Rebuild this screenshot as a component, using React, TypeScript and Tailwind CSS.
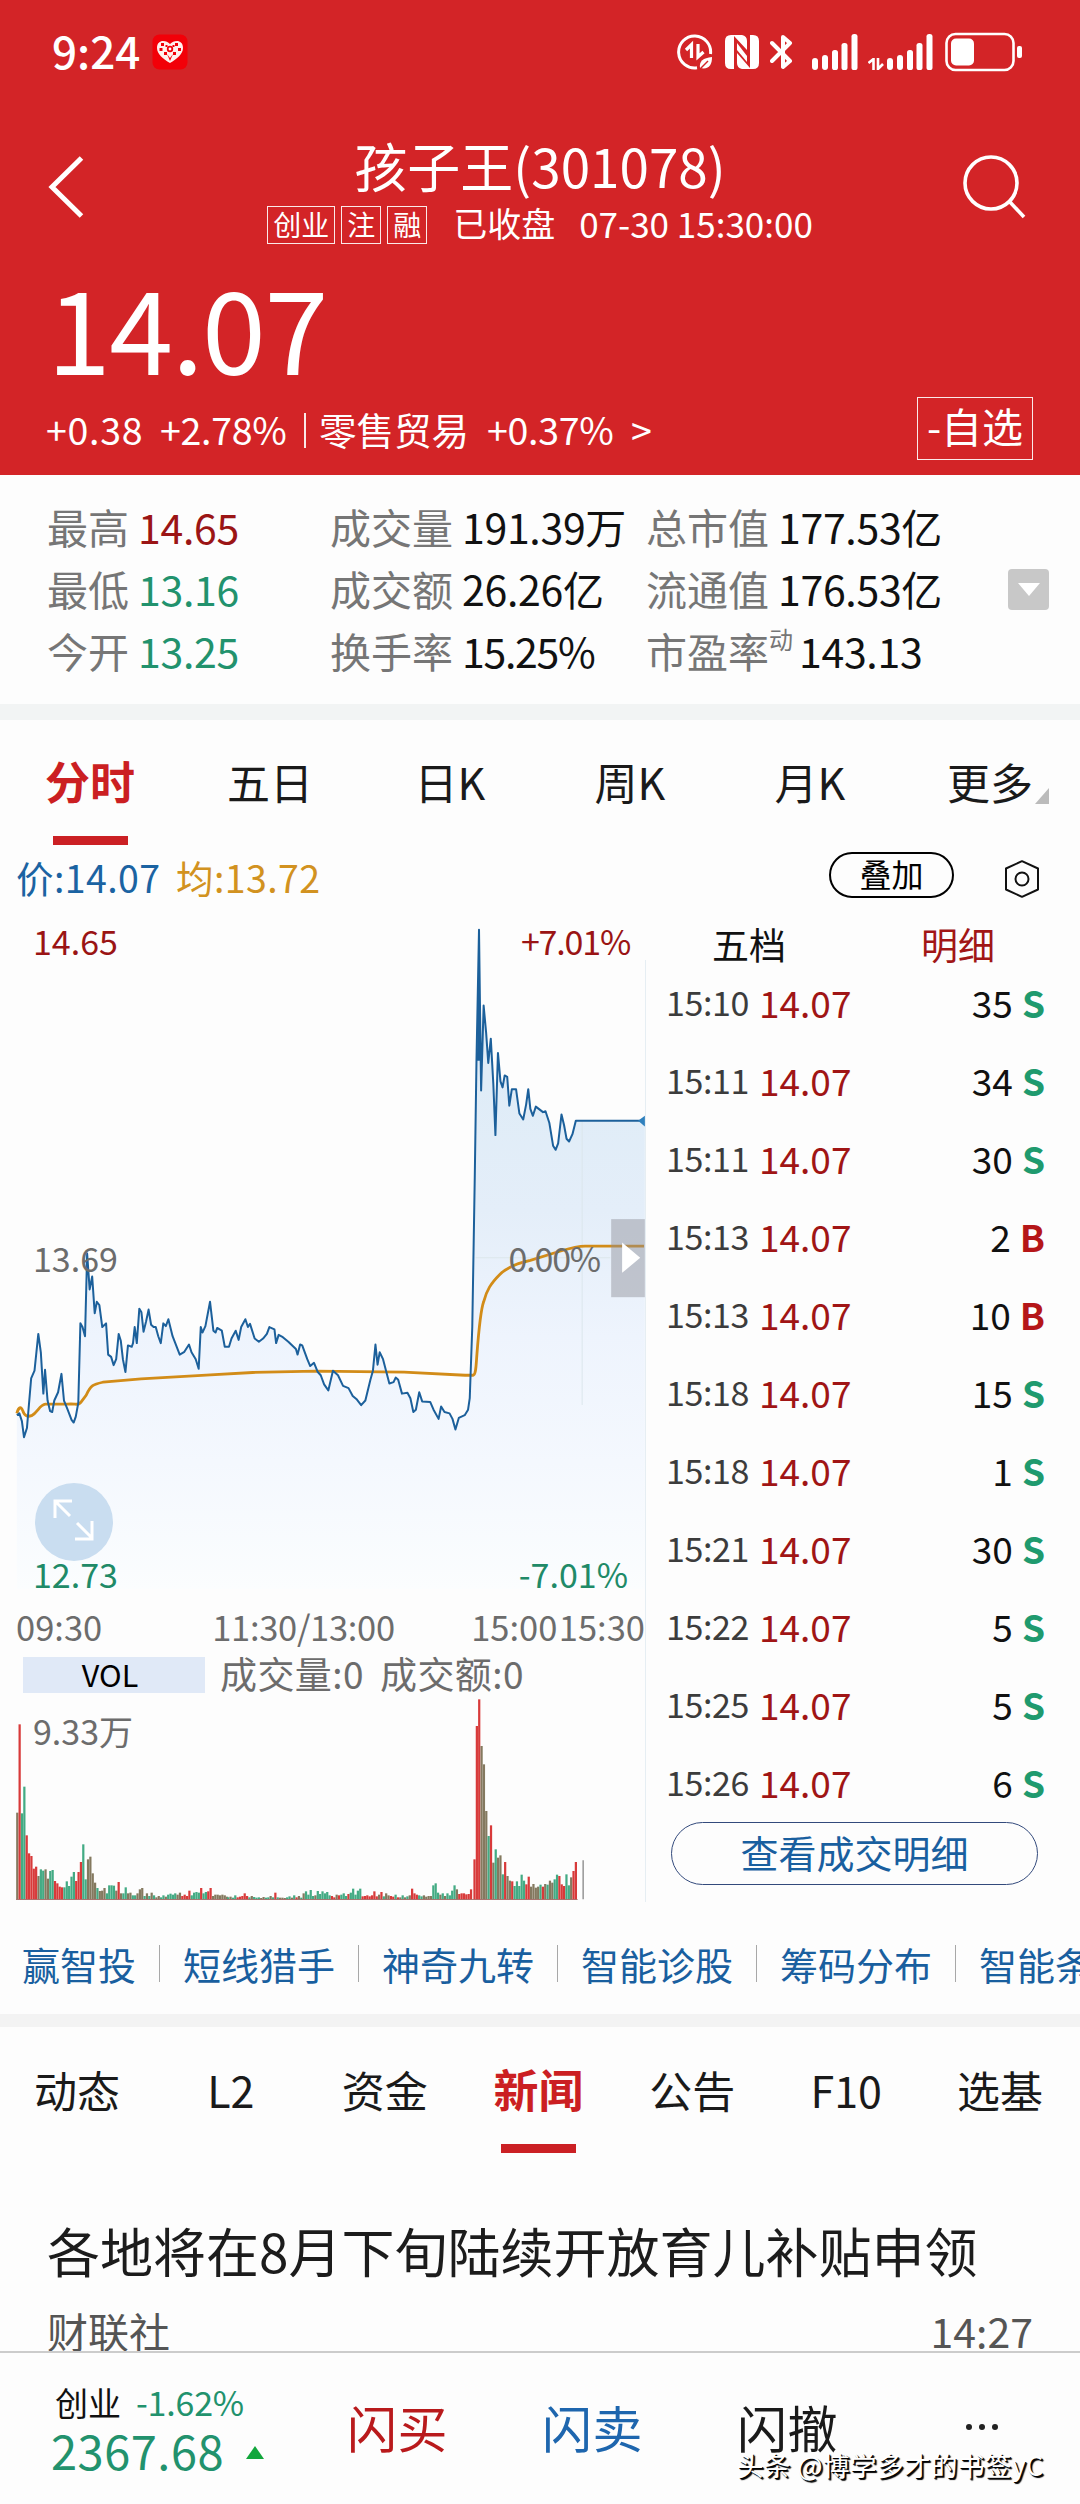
import React from 'react';

const PRICE_POINTS =
  '40,1122 46,1118 52,1135 57,1170 64,1150 74,1042 82,1025 91,945 97,985 103,1075 107,1023 113,1090 119,1113 124,1115 129,1090 138,1072 146,1032 152,1090 160,1108 170,1132 175,1138 180,1125 186,1095 191,922 196,930 202,950 207,770 213,848 219,820 225,900 230,875 236,882 243,930 252,922 257,990 264,995 270,1013 276,1000 282,945 287,960 292,1000 298,1028 304,970 313,973 316,965 320,930 325,965 331,890 336,898 341,940 347,918 353,892 359,925 365,930 370,930 376,950 382,965 388,922 394,928 400,913 410,950 427,990 438,984 449,968 455,985 465,1000 472,1021 477,930 481,942 488,928 499,875 507,938 512,942 516,932 527,938 534,973 544,973 550,955 560,938 567,958 573,930 583,913 589,930 594,923 605,955 615,962 625,955 634,945 640,930 652,935 656,965 662,947 672,952 685,962 703,978 707,990 713,968 718,970 730,1000 737,1015 746,1008 755,1028 762,1035 770,1055 780,1068 791,1025 803,1035 815,1058 828,1063 838,1080 848,1088 858,1100 868,1090 880,1045 886,1025 892,968 897,1012 902,985 910,1000 925,1053 935,1050 940,1040 946,1045 955,1075 968,1073 975,1085 982,1115 988,1110 996,1072 1003,1092 1022,1093 1030,1110 1042,1130 1048,1103 1056,1115 1068,1118 1075,1130 1082,1153 1090,1128 1104,1122 1112,1110 1116,1085 1122,930 1128,600 1132,350 1138,65 1143,415 1149,230 1155,290 1160,355 1166,302 1172,400 1177,512 1183,333 1189,395 1194,408 1199,382 1205,385 1210,448 1216,412 1226,412 1234,465 1243,478 1250,445 1255,412 1260,455 1266,470 1273,450 1290,462 1296,460 1305,485 1314,535 1320,544 1326,530 1334,467 1340,490 1346,520 1352,526 1360,510 1368,481 1530,481';

const AVERAGE_PATH =
  'M40 1118 C44 1104 50 1102 54 1112 C58 1124 66 1126 75 1123 C90 1116 94 1099 108 1098 H160 C180 1096 186 1102 192 1094 L205 1078 C216 1056 222 1055 245 1050 L335 1043 L500 1034 L600 1029 L750 1026 L960 1028 L1105 1035 H1124 C1131 1034 1131 1012 1133 990 C1138 930 1143 890 1149 875 C1156 850 1166 835 1188 815 C1206 799 1240 789 1260 785 L1330 765 C1360 757 1375 754 1390 754 H1530';

type Run = { x: number; h: number[]; c: string };

// Volume per minute: first bar position, bar heights and one colour letter per bar.
const VOLUME: Run[] = [
  {
    x: 41,
    h: [260, 525, 258, 338, 192, 138, 130, 92, 98, 70, 90, 86, 90, 62, 85, 88, 55, 48, 38, 36, 36, 54, 40, 68, 82, 55, 82, 112, 165, 60, 120, 128, 78, 50, 34, 25, 26, 34, 18, 42, 42, 41, 26, 52, 18, 18, 36, 18, 20, 12, 12, 18, 30, 34, 10, 18, 10, 20, 12, 6, 10, 6, 12, 8, 14, 17, 14, 18, 14, 20, 10, 14, 10, 26, 12, 20, 22, 20, 34, 18, 22, 24, 34, 10, 14, 14, 12, 14, 12, 8],
    c: 'brggrrrrrbggbbggrrrrgggggrrrggbbbbgbbbggggbrbggbbggbbbgbgbgbbggbggggbbrrrrggggrggrrbbbbbbb',
  },
  {
    x: 542,
    h: [6, 8, 5, 12, 6, 8, 10, 18, 10, 6, 10, 7, 5, 6, 4, 7, 5, 6, 10, 6, 20, 6, 5, 5, 4, 6, 9, 5, 12, 6, 10, 5, 18, 24, 14, 28, 10, 12, 25, 16, 24, 18, 22, 12, 10, 6, 14, 12, 14, 18, 10, 16, 20, 32, 14, 26, 32, 9, 10, 12, 9, 12, 24, 9, 14, 22, 9, 18, 12, 10, 8, 14, 6, 6, 12, 6, 9, 12, 32, 18, 14, 12, 9, 12, 8, 10, 10, 42, 48, 20, 14, 18, 10, 18, 12, 26, 42, 30, 16, 18, 18, 15, 16, 30],
    c: 'gbggrrrrrgbgggbbggbgrgbbbggbgrbgbggggbggggggrrbrgggrgggggrrrrrrrbrgbbrrgrbgbgbrrrggbbbbgggbgbggggbrrrrrr',
  },
  {
    x: 1127,
    h: [120, 520, 600, 460, 405, 265, 190, 222, 110, 150, 125, 132, 75, 112, 70, 56, 54, 40, 54, 40, 74, 56, 45, 68, 38, 46, 35, 38, 44, 38, 46, 44, 56, 50, 60, 74, 70, 45, 40, 75, 42, 66, 85, 112],
    c: 'rrrbbbgrbgbbgrbbrgggggrrbbbbgrbgbbggrrrggbrr',
  },
];

const TRADES: [string, number, string][] = [
  ['15:10', 35, 'S'],
  ['15:11', 34, 'S'],
  ['15:11', 30, 'S'],
  ['15:13', 2, 'B'],
  ['15:13', 10, 'B'],
  ['15:18', 15, 'S'],
  ['15:18', 1, 'S'],
  ['15:21', 30, 'S'],
  ['15:22', 5, 'S'],
  ['15:25', 5, 'S'],
  ['15:26', 6, 'S'],
];

function SignalBars() {
  return (
    <svg className="h-9 w-[46px]" viewBox="0 0 46 36" fill="#fff">
      <rect x="0" y="24" width="6" height="12" rx="3" />
      <rect x="10" y="21" width="6" height="15" rx="3" />
      <rect x="20" y="16" width="6" height="20" rx="2.6" />
      <rect x="29.500" y="9" width="6" height="27" rx="2.600" />
      <rect x="39.500" y="0" width="6" height="36" rx="2.600" />
    </svg>
  );
}

function StatusBar() {
  return (
    <div className="flex h-[104px] items-center pl-[52px] pr-[57px]">
      <span className="w-[100px] pb-1 text-[44px] font-medium leading-[50px]">9:24</span>
      <svg className="h-9 w-9" viewBox="0 0 36 36">
        <rect x="0.500" y="0.500" width="35" height="35" rx="7" fill="#f20008" />
        <path d="M18 29 C11 25 5 20 5 14 C5 9 8 7 11 7 C14 7 16 8 18 10 C20 8 22 7 25 7 C28 7 31 9 31 14 C31 20 25 25 18 29Z" fill="#fff0ee" />
        <g fill="#f20008">
          <rect x="9" y="9" width="3" height="3" />
          <rect x="23" y="9" width="3" height="3" />
          <circle cx="18" cy="15" r="3.200" />
          <rect x="7.500" y="14" width="3" height="3" />
          <rect x="26" y="14" width="3" height="3" />
          <rect x="12" y="18" width="3" height="3" />
          <rect x="21" y="18" width="3" height="3" />
          <path d="M15 20 L18 24 L21 20 L18 27Z" />
          <rect x="13.500" y="11" width="2" height="2" />
          <rect x="20.500" y="11" width="2" height="2" />
        </g>
        <circle cx="18" cy="15" r="1.400" fill="#fff" />
      </svg>
      <div className="ml-auto flex items-center">
        <svg className="h-9 w-9" viewBox="0 0 36 36" fill="none" stroke="#fff" strokeWidth="3">
          <path d="M33.500 20 A16 16 0 1 0 20 33.800" />
          <path d="M9 16 L14.500 10.500 V24" strokeWidth="3.200" />
          <path d="M21 10 V23 L26.500 18" strokeWidth="3.200" />
          <path d="M35 23 C26 24 22 27 23 34 C32 36 35 31 35 23Z" fill="#fff" stroke="none" />
          <path d="M23 35 L31 27" stroke="#d32427" strokeWidth="1.500" />
        </svg>
        <svg className="ml-3 h-[34px] w-[34px]" viewBox="0 0 34 34">
          <path d="M6 0 H9 V34 H6 Q0 34 0 28 V6 Q0 0 6 0Z M25 34 H28 Q34 34 34 28 V6 Q34 0 28 0 H25Z" fill="#fff" />
          <path d="M9 0 H17 Q22 1 22 6 V15 L9 1Z M25 34 H17 Q12 33 12 28 V18 L25 33Z" fill="#fff" />
          <path d="M12 8 L22 21 V27 L12 15Z" fill="#fff" />
        </svg>
        <svg className="ml-[11px] h-9 w-6" viewBox="0 0 24 36" fill="none" stroke="#fff" strokeWidth="4" strokeLinejoin="round" strokeLinecap="round">
          <path d="M2 9 L20 27 L13 33 V3 L20 9 L2 27" />
        </svg>
        <div className="ml-[18px]"><SignalBars /></div>
        <svg className="ml-[10px] mt-6 h-3 w-4" viewBox="0 0 16 12" fill="none" stroke="#fff" strokeWidth="2.600">
          <path d="M0.500 5 L5.500 1 V12 M10 0 V11 L15 6" />
        </svg>
        <div className="ml-[3px]"><SignalBars /></div>
        <svg className="ml-3 h-10 w-[78px]" viewBox="0 0 78 40">
          <rect x="1.500" y="2" width="67" height="36" rx="9" fill="none" stroke="#fff" strokeWidth="2.600" />
          <rect x="6" y="6.500" width="23" height="27" rx="5" fill="#fff" />
          <rect x="72" y="14" width="5" height="12" rx="2" fill="#fff" />
        </svg>
      </div>
    </div>
  );
}

function Tag({ children }: { children: React.ReactNode }) {
  return (
    <span className="mr-[6px] flex h-[38px] items-center border border-white/90 px-[5px] pb-[3px] text-[28px] leading-none">
      {children}
    </span>
  );
}

function Header() {
  return (
    <header className="h-[475px] bg-[#d32427] text-white">
      <StatusBar />
      <div className="flex h-[146px]">
        <svg className="ml-12 mt-[52px] h-[62px] w-9" viewBox="0 0 36 62" fill="none" stroke="#fff" strokeWidth="5">
          <path d="M33.500 2 L4 31 L33.500 60" />
        </svg>
        <div className="ml-[176px] flex w-[560px] flex-col items-center pt-[31px]">
          <h1 className="h-[69px] text-[53px] leading-[60px]">孩子王(301078)</h1>
          <div className="flex items-center">
            <Tag>创业</Tag>
            <Tag>注</Tag>
            <Tag>融</Tag>
            <span className="ml-5 pb-1 text-[34px] leading-[38px]">已收盘</span>
            <span className="ml-6 pb-1 text-[35px] leading-[38px]">07-30 15:30:00</span>
          </div>
        </div>
        <svg className="ml-auto mr-[54px] mt-[51px] h-[64px] w-[64px]" viewBox="0 0 64 64" fill="none" stroke="#fff" strokeWidth="3.600">
          <circle cx="29" cy="28" r="26" />
          <path d="M47 46 L62 62" />
        </svg>
      </div>
      <div className="h-[147px] pl-[47px] text-[115px] leading-[150px] tracking-[-1.500px]">14.07</div>
      <div className="flex h-[63px] items-center pl-[46px] pr-[47px] text-[37.5px] leading-none">
        <span className="w-[114px] tracking-[0.700px]">+0.38</span>
        <span className="w-[144px] tracking-[-0.300px]">+2.78%</span>
        <span className="mr-[13px] mt-1 h-[35px] w-[2px] bg-white/90" />
        <span className="w-[168px] text-[37.5px]">零售贸易</span>
        <span className="w-[144px] tracking-[-0.300px]">+0.37%</span>
        <span>&gt;</span>
        <span className="ml-auto flex h-[63px] w-[116px] items-center justify-center border border-white/90 pb-1.5 text-[41px]">-自选</span>
      </div>
    </header>
  );
}

function Stat({ label, value, tone, w }: { label: React.ReactNode; value: string; tone?: string; w: string }) {
  return (
    <div className="flex whitespace-nowrap">
      <span className={`${w} text-[#767676]`}>{label}</span>
      <span className={tone || 'tracking-[-0.300px] text-[#111]'}>{value}</span>
    </div>
  );
}

function Stats() {
  return (
    <section className="flex h-[229px] pl-[47px] pt-5 text-[41px] leading-[62px]">
      <div className="w-[283px]">
        <Stat w="w-[91px]" label="最高" value="14.65" tone="tracking-[-0.300px] text-[#9b1515]" />
        <Stat w="w-[91px]" label="最低" value="13.16" tone="tracking-[-0.300px] text-[#22926d]" />
        <Stat w="w-[91px]" label="今开" value="13.25" tone="tracking-[-0.300px] text-[#22926d]" />
      </div>
      <div className="w-[316px]">
        <Stat w="w-[132px]" label="成交量" value="191.39万" />
        <Stat w="w-[132px]" label="成交额" value="26.26亿" />
        <Stat w="w-[132px]" label="换手率" value="15.25%" tone="tracking-[-1.300px] text-[#111]" />
      </div>
      <div className="w-[362px]">
        <Stat w="w-[132px]" label="总市值" value="177.53亿" />
        <Stat w="w-[132px]" label="流通值" value="176.53亿" />
        <Stat
          w="w-[153px] flex"
          label={<>市盈率<span className="text-[24px] leading-[40px]">动</span></>}
          value="143.13"
        />
      </div>
      <span className="mt-[74px] flex h-[41px] w-[41px] items-center justify-center rounded bg-[#c8c8c8]">
        <svg className="h-[13px] w-[22px]" viewBox="0 0 22 13"><path d="M0 0 H22 L11 13Z" fill="#fff" /></svg>
      </span>
    </section>
  );
}

function Tab({ label, active, corner }: { label: string; active?: boolean; corner?: boolean }) {
  return (
    <div className="relative flex flex-1 flex-col items-center">
      <span className={active ? 'h-[82px] text-[45px] font-bold leading-[54px] text-[#cb1f22]' : 'h-[82px] text-[43px] leading-[54px] text-[#1a1a1a]'}>
        {label}
      </span>
      {active && <span className="h-[9px] w-[75px] bg-[#cb2024]" />}
      {corner && (
        <svg className="absolute right-[31px] top-[34px] h-4 w-[14px]" viewBox="0 0 14 16"><path d="M14 0 V16 H0Z" fill="#bbb" /></svg>
      )}
    </div>
  );
}

function PriceChart() {
  return (
    <div className="relative h-[696px] w-[645px]">
      <svg className="absolute -top-[8px] left-0 h-[720px] w-[660px]" viewBox="0 0 1568 1568" preserveAspectRatio="none" fill="none">
        <defs>
          <linearGradient id="area" gradientUnits="userSpaceOnUse" x1="0" y1="400" x2="0" y2="1500">
            <stop offset="0" stopColor="#dfecf7" />
            <stop offset="0.250" stopColor="#e4eef9" />
            <stop offset="0.500" stopColor="#eef4fd" />
            <stop offset="0.750" stopColor="#f4f8fe" />
            <stop offset="1" stopColor="#fbfdfe" />
          </linearGradient>
        </defs>
        <polygon points={`${PRICE_POINTS} 1532,481 1532,1500 40,1500`} fill="url(#area)" />
        <path d="M1130 779 H1450 M1383 481 V1100" stroke="#dbe6ec" strokeWidth="1" vectorEffect="non-scaling-stroke" />
        <path d={AVERAGE_PATH} stroke="#d28c18" strokeWidth="2.800" vectorEffect="non-scaling-stroke" />
        <polyline points={PRICE_POINTS} stroke="#1c609b" strokeWidth="2" strokeLinejoin="round" vectorEffect="non-scaling-stroke" />
        <path d="M1133 350 L1138 65 L1142 350Z" fill="#1c609b" />
        <path d="M1516 481 L1532 470 V493Z" fill="#2f80bd" />
        <rect x="1452" y="695" width="80" height="170" fill="#8b8b95" fillOpacity="0.450" />
        <path d="M1478 746 L1521 779 L1478 812Z" fill="#fff" />
      </svg>
      <div className="absolute inset-0 text-[34px] leading-[40px]">
        <span className="absolute left-[33px] top-[13px] text-[#9a1414]">14.65</span>
        <span className="absolute right-[15px] top-[13px] tracking-[-1.200px] text-[#9a1414]">+7.01%</span>
        <span className="absolute left-[33px] top-[330px] text-[#6c6c6c]">13.69</span>
        <span className="absolute right-[45px] top-[330px] tracking-[-1.200px] text-[#6c6c6c]">0.00%</span>
        <svg className="absolute left-[35px] top-[575px] h-[78px] w-[78px]" viewBox="0 0 78 78" fill="none" stroke="#fff" strokeWidth="3">
          <circle cx="39" cy="39" r="39" fill="#c9ddf0" stroke="none" />
          <path d="M35 33 L20 18 M20 35 V18 H37 M42 40 L57 55 M57 38 V56 H40" />
        </svg>
        <span className="absolute left-[33px] top-[646px] text-[#208a67]">12.73</span>
        <span className="absolute right-[17px] top-[646px] text-[#208a67]">-7.01%</span>
      </div>
    </div>
  );
}

function VolumeChart() {
  const fills: Record<string, string> = { r: '#d83a3a', g: '#43ab84', b: '#84795f' };
  return (
    <div className="relative h-[206px] w-[645px]">
      <svg className="h-[204px] w-[645px]" viewBox="0 410 1532 612" preserveAspectRatio="none">
        {VOLUME.map((run) =>
          run.h.map((h, i) => (
            <rect key={`${run.x}-${i}`} x={run.x + i * 5.6 - 2.6} y={1020 - h} width="5.300" height={h} fill={fills[run.c[i] || 'b']} />
          )),
        )}
        <path d="M38 1021 H1372" stroke="#9a5550" strokeWidth="3" />
        <path d="M1385 903 V1020" stroke="#6a6a6a" strokeWidth="2.500" />
      </svg>
      <span className="absolute left-[33px] top-[15px] text-[34px] leading-[40px] text-[#6c6c6c]">9.33万</span>
    </div>
  );
}

function ChartColumn() {
  return (
    <div className="w-[645px] shrink-0">
      <PriceChart />
      <div className="flex h-[50px] pl-4 text-[34.5px] leading-[44px] text-[#6c6c6c]">
        <span className="w-[197px]">09:30</span>
        <span className="w-[260px] tracking-[-0.300px]">11:30/13:00</span>
        <span className="w-[88px]">15:00</span>
        <span>15:30</span>
      </div>
      <div className="flex h-[42px] items-center whitespace-nowrap pl-[23px] text-[37px] leading-[36px] text-[#6c6c6c]">
        <span className="mr-[15px] flex h-9 w-[182px] items-center justify-center bg-[#e0e9f7] pb-1 pr-2 pt-0.5 text-[30.5px] text-black">VOL</span>
        <span className="w-[160px] pb-1 tracking-[0.400px]">成交量:0</span>
        <span className="pb-1 tracking-[0.400px]">成交额:0</span>
      </div>
      <VolumeChart />
    </div>
  );
}

function TradesColumn() {
  return (
    <div className="flex-1 pl-5">
      <div className="flex h-[57px] text-[37px] leading-[72px] text-[#111]">
        <span className="w-[209px] pl-[46px]">五档</span>
        <span className="pl-[46px] text-[#a11616]">明细</span>
      </div>
      {TRADES.map(([time, qty, side], i) => (
        <div key={i} className="flex h-[78px] pr-[35px] text-[37px] leading-[74px]">
          <span className="w-[93px] text-[34px] tracking-[-0.400px] text-[#3c3c3c]">{time}</span>
          <span className="text-[#a01515]">14.07</span>
          <span className="ml-auto text-[#111]">{qty}</span>
          <span className={side === 'S' ? 'ml-[9px] font-bold text-[#1f9a6e]' : 'ml-[9px] font-bold text-[#b51618]'}>{side}</span>
        </div>
      ))}
      <button className="ml-[5px] mt-[-1px] block h-[63px] w-[367px] rounded-full border border-[#334a7c] pb-1 text-[38px] leading-[56px] text-[#195f9f]">
        查看成交明细
      </button>
    </div>
  );
}

function QuoteChart() {
  return (
    <section className="h-[1067px]">
      <div className="flex h-[62px] items-center pl-4 pr-[41px] text-[37.5px]">
        <span className="w-[160px] tracking-[0.400px] text-[#1b63a2]">价:14.07</span>
        <span className="tracking-[0.400px] text-[#d29220]">均:13.72</span>
        <span className="-mt-1 ml-auto flex h-[46px] w-[125px] items-center justify-center rounded-full border-2 border-black pb-1 text-[32px] leading-none text-black">叠加</span>
        <svg className="ml-[51px] mt-1 h-[38px] w-[34px]" viewBox="0 0 34 38" fill="none" stroke="#111" strokeWidth="2">
          <path d="M17 1.200 L33 8.500 V29.500 L17 36.800 L1 29.500 V8.500Z" strokeLinejoin="round" />
          <circle cx="17" cy="19" r="6.500" />
        </svg>
      </div>
      <div className="flex">
        <ChartColumn />
        <div className="mt-[52px] w-px bg-[#e6eef3]" />
        <TradesColumn />
      </div>
    </section>
  );
}

function ToolLinks() {
  const links = ['短线猎手', '神奇九转', '智能诊股', '筹码分布', '智能条件'];
  return (
    <nav className="flex h-[101px] items-center overflow-hidden whitespace-nowrap pl-[22px] text-[38px] leading-none text-[#195f9f]">
      <span className="mr-[23px]">赢智投</span>
      {links.map((label) => (
        <React.Fragment key={label}>
          <span className="h-[37px] w-px shrink-0 bg-[#a8a8a8]" />
          <span className="mx-[23px] shrink-0">{label}</span>
        </React.Fragment>
      ))}
    </nav>
  );
}

function BottomBar() {
  return (
    <footer className="relative flex h-[153px] border-t-2 border-[#cccccc] text-[50px] leading-[60px]">
      <div className="w-[347px] pl-[51px] pt-[27px]">
        <div className="flex h-[45px] text-[34px] leading-[44px] text-[#22926d]">
          <span className="w-[85px] pl-1 text-[33px] text-[#111]">创业</span>
          <span className="w-[120px] tracking-[-0.200px]">-1.62%</span>
        </div>
        <div className="flex items-center text-[47px] leading-[50px] tracking-[0.500px] text-[#22926d]">
          <span className="w-[195px]">2367.68</span>
          <svg className="mt-1 h-[13px] w-[18px]" viewBox="0 0 18 13"><path d="M9 0 L18 13 H0Z" fill="#12a63c" /></svg>
        </div>
      </div>
      <span className="w-[195px] pt-[43px] tracking-[0.500px] text-[#b91a1c]">闪买</span>
      <span className="w-[195px] pt-[43px] tracking-[0.500px] text-[#1e66ae]">闪卖</span>
      <span className="w-[229px] pt-[43px] tracking-[0.500px] text-[#1a1a1a]">闪撤</span>
      <div className="mt-[71px] flex gap-[7px]">
        <i className="h-[6px] w-[6px] rounded-full bg-[#222]" />
        <i className="h-[6px] w-[6px] rounded-full bg-[#222]" />
        <i className="h-[6px] w-[6px] rounded-full bg-[#222]" />
      </div>
      <span className="absolute left-[737px] top-[94px] whitespace-nowrap text-[26.5px] leading-[36px] tracking-[0.500px] text-white [text-shadow:1px_1px_0_#000,2px_2px_1px_#000]">
        头条 @博学多才的书签yC
      </span>
    </footer>
  );
}

export default function App() {
  return (
    <main className="h-[2504px] w-[1080px] overflow-hidden bg-[#fdfdfd] font-['Noto_Sans_CJK_SC','Noto_Sans',sans-serif]">
      <Header />
      <Stats />
      <div className="h-4 bg-[#f2f4f4]" />
      <nav className="flex h-[126px] pt-[34px]">
        <Tab label="分时" active />
        <Tab label="五日" />
        <Tab label="日K" />
        <Tab label="周K" />
        <Tab label="月K" />
        <Tab label="更多" corner />
      </nav>
      <QuoteChart />
      <ToolLinks />
      <div className="h-[13px] bg-[#f3f3f3]" />
      <nav className="flex h-[161px] pr-[3px] pt-[35px]">
        <Tab label="动态" />
        <Tab label="L2" />
        <Tab label="资金" />
        <Tab label="新闻" active />
        <Tab label="公告" />
        <Tab label="F10" />
        <Tab label="选基" />
      </nav>
      <article className="h-[163px] overflow-hidden pl-[47px] pr-[47px]">
        <h2 className="mt-[20px] h-[92px] whitespace-nowrap text-[53px] leading-[84px] text-[#1c1c1c]">各地将在8月下旬陆续开放育儿补贴申领</h2>
        <p className="flex justify-between text-[41px] leading-[60px] text-[#555]">
          <span>财联社</span>
          <span>14:27</span>
        </p>
      </article>
      <BottomBar />
    </main>
  );
}
